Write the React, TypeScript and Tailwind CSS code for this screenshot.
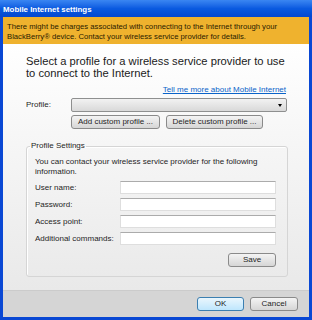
import React from 'react';

const Btn: React.FC<{ label: string; className?: string; primary?: boolean }> = ({ label, className = '', primary }) => (
  <button
    type="button"
    className={
      'h-[14px] rounded-[3px] border text-[8px] leading-none text-[#1e1e1e] ' +
      (primary
        ? 'border-[#3c7fb1] bg-gradient-to-b from-[#eaf6fd] to-[#bee6fd] '
        : 'border-[#8a8a8a] bg-gradient-to-b from-[#f4f4f4] to-[#d6d6d6] ') +
      className
    }
  >
    {label}
  </button>
);

const Field: React.FC<{ label: string }> = ({ label }) => (
  <div className="flex items-center h-[13px]">
    <span className="w-[85px] shrink-0">{label}</span>
    <input className="w-[156px] h-[13px] bg-white border border-[#dedede] border-t-[#ababab] outline-none" />
  </div>
);

export default function App() {
  return (
    <div className="w-[312px] h-[320px] flex flex-col bg-[#0a48d4] font-['Liberation_Sans',Arial,sans-serif] text-[8px] text-[#1e1e1e] overflow-hidden">
      <div className="h-[17px] shrink-0 flex items-center pl-[3px] pt-[2px] bg-gradient-to-b from-[#3a86f2] via-[#0a5ae0] to-[#0447d0] text-white font-bold text-[7.9px]">
        Mobile Internet settings
      </div>

      <div className="flex-1 flex flex-col mx-[3px] mb-[3px] overflow-hidden">
        <div className="h-[27px] shrink-0 pt-[5px] pl-[4px] bg-[#efb22e] text-[7.7px] leading-[9.5px] text-[#2a2000]">
          There might be charges associated with connecting to the Internet through your
          <br />
          BlackBerry® device. Contact your wireless service provider for details.
        </div>

        <div className="flex-1 flex flex-col pl-[23px] pr-[21px] bg-gradient-to-b from-white to-[#e9e9e9]">
          <h1 className="mt-[11px] text-[11.2px] leading-[12px] font-normal text-[#1a1a1a]">
            Select a profile for a wireless service provider to use
            <br />
            to connect to the Internet.
          </h1>

          <div className="mt-[6px] pr-[2px] text-right leading-[10px]">
            <a href="#" className="text-[#0a63c9] underline">Tell me more about Mobile Internet</a>
          </div>

          <div className="mt-[3px] flex items-center h-[14px]">
            <span className="w-[45px] shrink-0">Profile:</span>
            <div className="w-[216px] h-[14px] flex items-center justify-end pr-[4px] rounded-[2px] border border-[#8e8f8f] bg-gradient-to-b from-[#f2f2f2] to-[#d9d9d9]">
              <span className="w-0 h-0 border-l-[2.5px] border-r-[2.5px] border-t-[3px] border-l-transparent border-r-transparent border-t-black" />
            </div>
          </div>

          <div className="mt-[3px] flex gap-[6px] pl-[45px]">
            <Btn label="Add custom profile ..." className="w-[89px]" />
            <Btn label="Delete custom profile ..." className="w-[97px]" />
          </div>

          <fieldset className="mt-[12px] border border-[#d5d5d5] rounded-[3px] pl-[8px] pr-[11px] pt-[6px] pb-[9px] shadow-[inset_1px_1px_0_#ffffff]">
            <legend className="ml-[-5px] px-[1px] leading-[10px]">Profile Settings</legend>
            <p className="leading-[10px]">
              You can contact your wireless service provider for the following
              <br />
              information.
            </p>
            <div className="mt-[4px] flex flex-col gap-[4px]">
              <Field label="User name:" />
              <Field label="Password:" />
              <Field label="Access point:" />
              <Field label="Additional commands:" />
            </div>
            <div className="mt-[8px] flex justify-end">
              <Btn label="Save" className="w-[48px]" />
            </div>
          </fieldset>
        </div>

        <div className="h-[27px] shrink-0 flex items-center justify-end gap-[6px] pr-[11px] bg-[#d5d5d5] border-t border-[#cbcbcb]">
          <Btn label="OK" primary className="w-[47px]" />
          <Btn label="Cancel" className="w-[48px]" />
        </div>
      </div>
    </div>
  );
}
